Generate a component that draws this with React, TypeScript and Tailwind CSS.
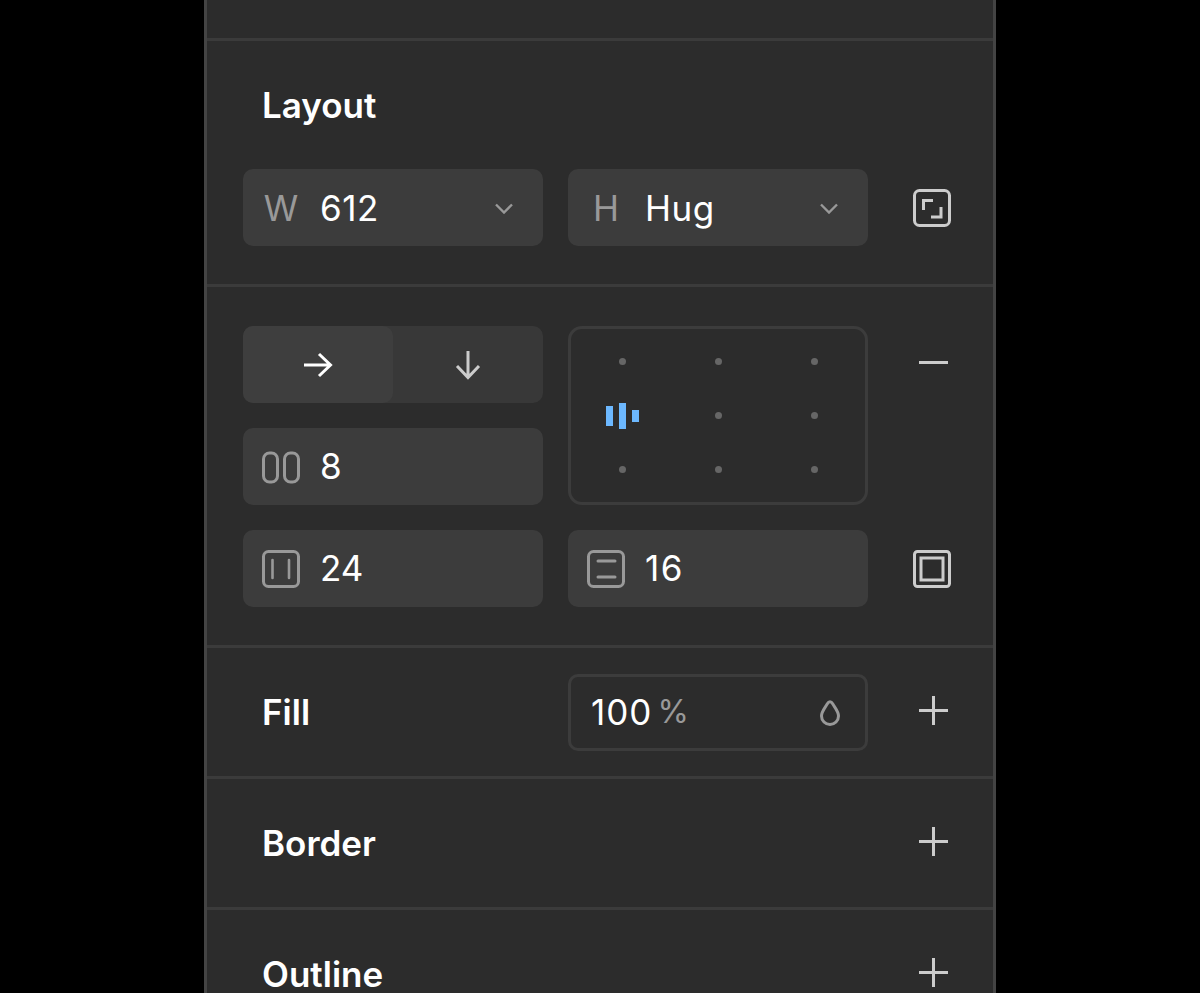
import type { ReactNode } from "react";

function Chevron() {
  return (
    <svg width="18" height="11" viewBox="0 0 18 11" fill="none" stroke="#999" strokeWidth="2.4">
      <path d="M1 1.500 9 9.500l8-8" />
    </svg>
  );
}

function Field({ children, className = "" }: { children: ReactNode; className?: string }) {
  return (
    <div className={`flex h-[77px] items-center gap-[20px] rounded-[10px] bg-[#3c3c3c] pl-[19px] text-[35px] text-white ${className}`}>
      {children}
    </div>
  );
}

function SizeField({ label, value }: { label: string; value: string }) {
  return (
    <Field className="pt-[1px] pr-[30px]">
      <span className="w-[38px] text-center text-[#999]">{label}</span>
      <span className="flex-1 tracking-[0.5px]">{value}</span>
      <Chevron />
    </Field>
  );
}

function GapIcon() {
  return (
    <svg width="38" height="38" viewBox="0 0 38 38" fill="none" stroke="#999" strokeWidth="3">
      <rect x="1.500" y="5" width="14" height="29" rx="6" />
      <rect x="22.500" y="5" width="14" height="29" rx="6" />
    </svg>
  );
}

function PadXIcon() {
  return (
    <svg width="38" height="38" viewBox="0 0 38 38" fill="none" stroke="#999" strokeWidth="3">
      <rect x="1.500" y="1.500" width="35" height="35" rx="5" />
      <path d="M10.500 10v18M27 10v18" strokeWidth="2.600" strokeLinecap="round" />
    </svg>
  );
}

function PadYIcon() {
  return (
    <svg width="38" height="38" viewBox="0 0 38 38" fill="none" stroke="#999" strokeWidth="3">
      <rect x="1.500" y="1.500" width="35" height="35" rx="5" />
      <path d="M11 11h17M11 27h17" strokeLinecap="round" />
    </svg>
  );
}

function ResizeIcon() {
  return (
    <svg width="38" height="38" viewBox="0 0 38 38" fill="none" stroke="#ccc" strokeWidth="3">
      <rect x="1.500" y="1.500" width="35" height="35" rx="5" />
      <path d="M20 11.500h-9.500v9.500M18 28h10v-10" />
    </svg>
  );
}

function FrameIcon() {
  return (
    <svg width="38" height="38" viewBox="0 0 38 38" fill="none" stroke="#ccc" strokeWidth="3">
      <rect x="1.500" y="1.500" width="35" height="35" rx="3" />
      <rect x="8" y="8" width="22" height="22" />
    </svg>
  );
}

function ArrowRight() {
  return (
    <svg width="30" height="26" viewBox="0 0 30 26" fill="none" stroke="#fff" strokeWidth="3">
      <path d="M1 13h27M16 2l11.500 11L16 24" />
    </svg>
  );
}

function ArrowDown() {
  return (
    <svg width="26" height="30" viewBox="0 0 26 30" fill="none" stroke="#ccc" strokeWidth="3">
      <path d="M13 1v27M2 16l11 11.500L24 16" />
    </svg>
  );
}

function Plus() {
  return (
    <svg width="29" height="29" viewBox="0 0 29 29" fill="none" stroke="#ccc" strokeWidth="3">
      <path d="M0 14.500h29M14.500 0v29" />
    </svg>
  );
}

function Drop() {
  return (
    <svg width="20" height="27" viewBox="0 0 20 27" fill="none" stroke="#999" strokeWidth="3" strokeLinejoin="round">
      <path d="M7.500 4.500C8.800 2 11.200 2 12.500 4.500 15 9 18.500 12.500 18.500 17a8.500 8.500 0 0 1-17 0C1.500 12.500 5 9 7.500 4.500Z" />
    </svg>
  );
}

function Dot() {
  return (
    <div className="flex h-[54px] w-[96px] items-center justify-center">
      <div className="h-[7px] w-[7px] rounded-full bg-[#666]" />
    </div>
  );
}

function AlignBox() {
  return (
    <div className="row-span-2 flex items-center justify-center rounded-[14px] border-[3px] border-[#3c3c3c]">
      <div className="grid grid-cols-3">
        <Dot />
        <Dot />
        <Dot />
        <div className="flex h-[54px] w-[96px] items-center justify-center gap-[6px]">
          <div className="h-[20px] w-[7px] bg-[#6cb8ff]" />
          <div className="h-[26px] w-[7px] bg-[#6cb8ff]" />
          <div className="h-[12px] w-[7px] bg-[#6cb8ff]" />
        </div>
        <Dot />
        <Dot />
        <Dot />
        <Dot />
        <Dot />
      </div>
    </div>
  );
}

function Title({ children }: { children: ReactNode }) {
  return <h2 className="pl-[19px] text-[35px] leading-[38px] font-semibold text-white">{children}</h2>;
}

function AddSection({ title, last }: { title: string; last?: boolean }) {
  return (
    <section
      className={`grid grid-cols-[300px_300px_78px] items-center gap-x-[25px] pl-[36px] ${
        last ? "h-[83px] pt-[45px]" : "h-[131px] border-b-[3px] border-[#3b3b3b]"
      }`}
    >
      <div className="col-span-2">
        <Title>{title}</Title>
      </div>
      <div className="flex justify-center pb-[4px] pl-[3px]">
        <Plus />
      </div>
    </section>
  );
}

export default function App() {
  return (
    <div className="flex h-[993px] justify-center overflow-hidden bg-black font-['Inter',sans-serif]">
      <div className="w-[792px] border-x-[3px] border-[#444] bg-[#2c2c2c]">
        <div className="h-[41px] border-b-[3px] border-[#3b3b3b]" />

        <section className="h-[246px] border-b-[3px] border-[#3b3b3b] pt-[45px] pl-[36px]">
          <Title>Layout</Title>
          <div className="mt-[45px] grid grid-cols-[300px_300px_78px] items-center gap-x-[25px]">
            <SizeField label="W" value="612" />
            <SizeField label="H" value="Hug" />
            <div className="flex justify-center">
              <ResizeIcon />
            </div>
          </div>
        </section>

        <section className="grid h-[361px] grid-cols-[300px_300px_78px] grid-rows-[77px_77px_77px] content-start items-stretch gap-x-[25px] gap-y-[25px] border-b-[3px] border-[#3b3b3b] pt-[39px] pl-[36px]">
          <div className="flex h-[77px] rounded-[10px] bg-[#383838]">
            <div className="flex w-[150px] items-center justify-center rounded-[10px] bg-[#3e3e3e]">
              <ArrowRight />
            </div>
            <div className="flex flex-1 items-center justify-center">
              <ArrowDown />
            </div>
          </div>
          <AlignBox />
          <div className="flex h-[73px] items-center justify-center pl-[3px]">
            <svg width="29" height="3" viewBox="0 0 29 3">
              <path d="M0 1.500h29" stroke="#ccc" strokeWidth="3" />
            </svg>
          </div>
          <Field className="col-start-1 row-start-2">
            <GapIcon />
            <span>8</span>
          </Field>
          <Field className="col-start-1 row-start-3">
            <PadXIcon />
            <span>24</span>
          </Field>
          <Field className="col-start-2 row-start-3">
            <PadYIcon />
            <span className="tracking-[1.500px]">16</span>
          </Field>
          <div className="col-start-3 row-start-3 flex items-center justify-center">
            <FrameIcon />
          </div>
        </section>

        <section className="grid h-[131px] grid-cols-[300px_300px_78px] items-center gap-x-[25px] border-b-[3px] border-[#3b3b3b] pl-[36px]">
          <Title>Fill</Title>
          <div className="flex h-[77px] items-center rounded-[10px] border-[3px] border-[#3c3c3c] pr-[25px] pl-[20px] text-[35px] text-white">
            <span className="tracking-[1px]">100</span>
            <span className="ml-[5px] flex-1 text-[32px] text-[#999]">%</span>
            <Drop />
          </div>
          <div className="flex justify-center pb-[4px] pl-[3px]">
            <Plus />
          </div>
        </section>

        <AddSection title="Border" />
        <AddSection title="Outline" last />
      </div>
    </div>
  );
}
